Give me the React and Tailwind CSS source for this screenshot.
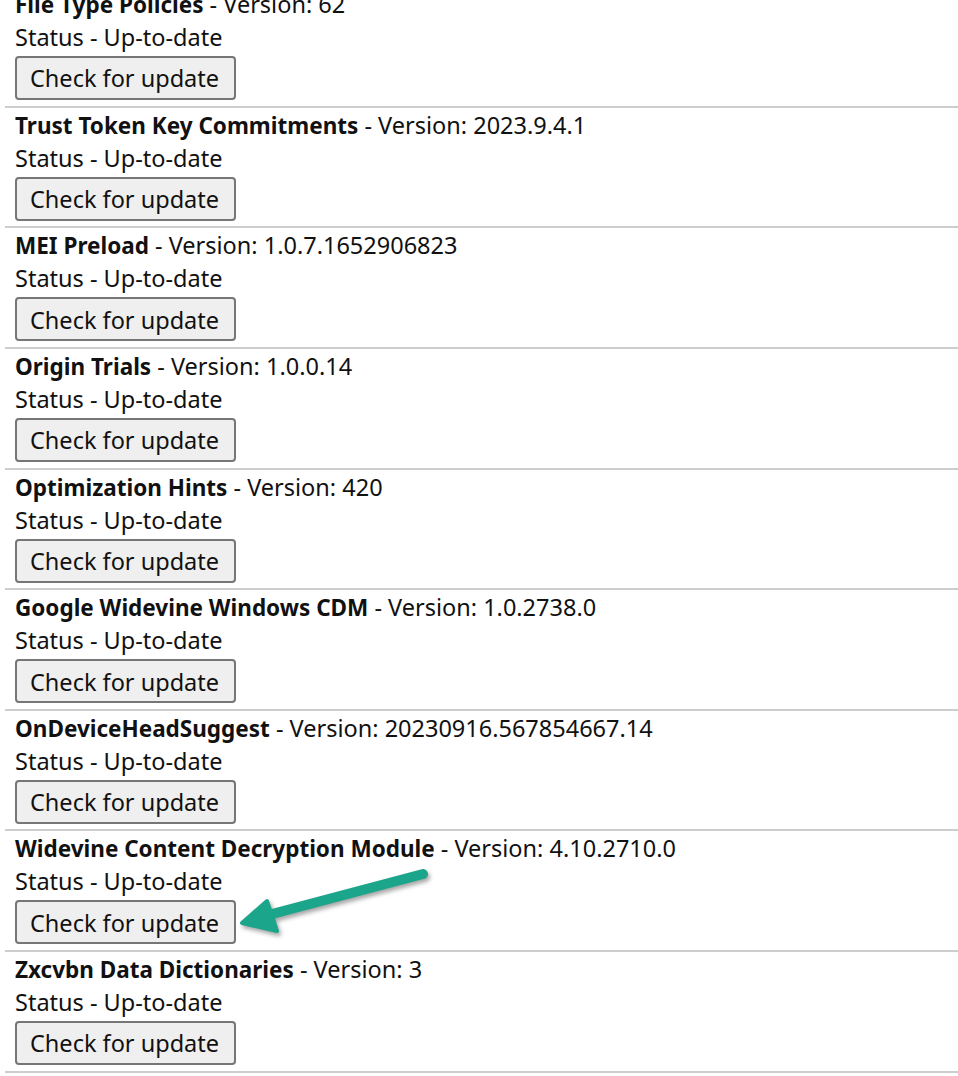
const components = [
  { name: 'File Type Policies', version: '62' },
  { name: 'Trust Token Key Commitments', version: '2023.9.4.1' },
  { name: 'MEI Preload', version: '1.0.7.1652906823' },
  { name: 'Origin Trials', version: '1.0.0.14' },
  { name: 'Optimization Hints', version: '420' },
  { name: 'Google Widevine Windows CDM', version: '1.0.2738.0' },
  { name: 'OnDeviceHeadSuggest', version: '20230916.567854667.14' },
  { name: 'Widevine Content Decryption Module', version: '4.10.2710.0' },
  { name: 'Zxcvbn Data Dictionaries', version: '3' },
];

const ComponentRow = ({ name, version }) => (
  <div className="h-[120.625px] flex flex-col border-b-2 border-[#cdcdcd] pl-[10px]">
    <div className="h-[33px] leading-[34px] whitespace-nowrap">
      <span className="font-bold text-[22.5px]">{name}</span> - Version: {version}
    </div>
    <div className="h-[32px] leading-[34px]">Status - Up-to-date</div>
    <button className="mt-[4px] w-[221px] h-[44px] text-left pl-[13px] pt-[2px] bg-[#efefef] border-2 border-[#767676] rounded-[4px] text-[#111]">
      Check for update
    </button>
  </div>
);

const Arrow = () => (
  <svg
    className="absolute left-[230px] top-[860px] drop-shadow-[2px_3px_2px_rgba(0,0,0,0.35)]"
    width="210"
    height="85"
    viewBox="230 860 210 85"
  >
    <line x1="423" y1="874" x2="272" y2="914" stroke="#1ba58b" strokeWidth="10" strokeLinecap="round" />
    <polygon points="242,923 267,901 277,931" fill="#1ba58b" stroke="#1ba58b" strokeWidth="4" strokeLinejoin="round" />
  </svg>
);

export default function App() {
  return (
    <div className="relative w-[958px] h-[1076px] overflow-hidden bg-white text-[#111] text-[23.5px] font-['Noto_Sans',sans-serif]">
      <div className="ml-[5px] -mt-[13px]">
        {components.map((c) => (
          <ComponentRow key={c.name} {...c} />
        ))}
      </div>
      <Arrow />
    </div>
  );
}
